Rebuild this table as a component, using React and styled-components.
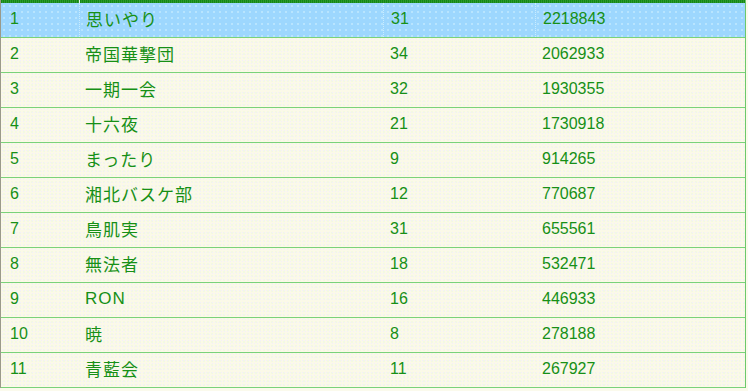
import React from "react";
import styled, { createGlobalStyle } from "styled-components";

const Global = createGlobalStyle`
  html, body { margin: 0; padding: 0; background: #fbfaec; }
  body { font-family: "Liberation Sans", "Noto Sans CJK JP", sans-serif; }
`;

const Board = styled.div`
  width: 746px;
  border-left: 1px solid #9a9a8a;
  border-right: 1px solid #6cc86c;
  box-sizing: border-box;
`;

const HeaderBar = styled.div`
  display: grid;
  grid-template-columns: 78px 1fr;
  height: 3px;
  background: #1f8a1f;
`;

const HeaderCell = styled.div`
  background: repeating-linear-gradient(90deg, #168616 0 1px, #2c9a2c 1px 2px);
  & + & { border-left: 1px solid #e8f5e8; }
`;

const Row = styled.div`
  display: grid;
  grid-template-columns: 78px 304px 152px 1fr;
  height: 34px;
  align-items: center;
  border-bottom: 1px solid #7ad27a;
  color: #169016;
  font-size: 16px;
  background-color: ${(p) => (p.$active ? "#9dd7fe" : "#fbf9e8")};
  background-image: ${(p) =>
    p.$active
      ? "radial-gradient(circle, #d8f2ff 0.6px, transparent 0.8px)"
      : "radial-gradient(circle, #f3eefc 0.6px, transparent 0.9px), radial-gradient(circle, #eef8e0 0.6px, transparent 0.9px)"};
  background-size: ${(p) => (p.$active ? "6px 6px" : "3px 3px, 4px 4px")};
  background-position: 0 0, 1px 2px;
`;

const Cell = styled.div`
  padding-left: ${(p) => p.$pad || 7}px;
  padding-bottom: 3px;
  height: 100%;
  display: flex;
  align-items: center;
  white-space: nowrap;
  box-sizing: border-box;
  border-left: ${(p) => (p.$sep && p.$active ? "1px dotted #c8ecff" : "none")};
`;

const Name = styled(Cell)`
  font-size: 17px;
  letter-spacing: 1px;
`;

const rows = [
  [1, "思いやり", 31, 2218843],
  [2, "帝国華撃団", 34, 2062933],
  [3, "一期一会", 32, 1930355],
  [4, "十六夜", 21, 1730918],
  [5, "まったり", 9, 914265],
  [6, "湘北バスケ部", 12, 770687],
  [7, "鳥肌実", 31, 655561],
  [8, "無法者", 18, 532471],
  [9, "RON", 16, 446933],
  [10, "暁", 8, 278188],
  [11, "青藍会", 11, 267927],
];

export default function App() {
  return (
    <>
      <Global />
      <Board>
        <HeaderBar>
          <HeaderCell />
          <HeaderCell />
        </HeaderBar>
        {rows.map(([rank, name, count, score], i) => {
          const active = i === 0;
          return (
            <Row key={rank} $active={active}>
              <Cell $pad={9}>{rank}</Cell>
              <Name $pad={6} $sep $active={active}>{name}</Name>
              <Cell $pad={7} $sep $active={active}>{count}</Cell>
              <Cell $pad={7} $sep $active={active}>{score}</Cell>
            </Row>
          );
        })}
      </Board>
    </>
  );
}
